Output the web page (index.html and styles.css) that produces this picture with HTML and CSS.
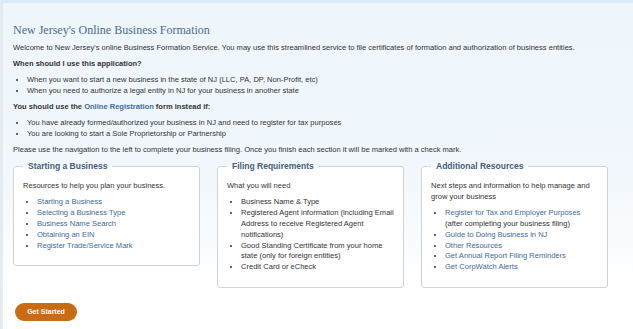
FILE: index.html
```html
<!DOCTYPE html>
<html lang="en">

<head>
    <meta charset="UTF-8">
    <meta name="viewport" content="width=device-width, initial-scale=1.0">
    <title>New Jersey's Online Business Formation</title>
    <link rel="stylesheet" href="styles.css">
</head>

<body>
    <main class="page">
        <h1 class="page-title">New Jersey's Online Business Formation</h1>
        <p>Welcome to New Jersey's online Business Formation Service. You may use this streamlined service to file certificates of formation and authorization of business entities.</p>

        <p class="question">When should I use this application?</p>
        <ul class="list">
            <li>When you want to start a new business in the state of NJ (LLC, PA, DP, Non-Profit, etc)</li>
            <li>When you need to authorize a legal entity in NJ for your business in another state</li>
        </ul>

        <p class="question">You should use the <a href="#">Online Registration</a> form instead if:</p>
        <ul class="list">
            <li>You have already formed/authorized your business in NJ and need to register for tax purposes</li>
            <li>You are looking to start a Sole Proprietorship or Partnership</li>
        </ul>

        <p>Please use the navigation to the left to complete your business filing. Once you finish each section it will be marked with a check mark.</p>

        <div class="boxes">
            <fieldset class="box">
                <legend>Starting a Business</legend>
                <p>Resources to help you plan your business.</p>
                <ul class="list">
                    <li><a href="#">Starting a Business</a></li>
                    <li><a href="#">Selecting a Business Type</a></li>
                    <li><a href="#">Business Name Search</a></li>
                    <li><a href="#">Obtaining an EIN</a></li>
                    <li><a href="#">Register Trade/Service Mark</a></li>
                </ul>
            </fieldset>

            <fieldset class="box">
                <legend>Filing Requirements</legend>
                <p>What you will need</p>
                <ul class="list">
                    <li>Business Name &amp; Type</li>
                    <li>Registered Agent information (including Email Address to receive Registered Agent notifications)</li>
                    <li>Good Standing Certificate from your home state (only for foreign entities)</li>
                    <li>Credit Card or eCheck</li>
                </ul>
            </fieldset>

            <fieldset class="box">
                <legend>Additional Resources</legend>
                <p>Next steps and information to help manage and grow your business</p>
                <ul class="list">
                    <li><a href="#">Register for Tax and Employer Purposes</a><br>(after completing your business filing)</li>
                    <li><a href="#">Guide to Doing Business in NJ</a></li>
                    <li><a href="#">Other Resources</a></li>
                    <li><a href="#">Get Annual Report Filing Reminders</a></li>
                    <li><a href="#">Get CorpWatch Alerts</a></li>
                </ul>
            </fieldset>
        </div>

        <button class="start-button">Get Started</button>
    </main>
</body>

</html>
```

FILE: styles.css
```css
* {
    margin: 0;
    padding: 0;
    box-sizing: border-box;
}

html,
body {
    height: 100%;
}

body {
    font-family: 'Liberation Sans', Arial, sans-serif;
    font-size: 7.55px;
    line-height: 10.8px;
    color: #333333;
    background-color: #ffffff;
}

a {
    color: #3d6b99;
    text-decoration: none;
}

.page {
    min-height: 100%;
    border-top: 3px solid #d9ebf7;
    border-left: 3px solid #e6ebef;
    padding: 20px 25px 0 10px;
    background: linear-gradient(#eef6fc 0%, #f1f7fc 50%, #ffffff 88%);
}

.page-title {
    font-family: 'Liberation Serif', 'Times New Roman', serif;
    font-size: 12px;
    line-height: 1.2;
    font-weight: normal;
    color: #4b6b8c;
    margin-bottom: 6px;
}

.page p {
    margin-bottom: 5.2px;
}

.question {
    font-weight: bold;
}

.list {
    padding-left: 14px;
    margin-bottom: 5px;
}

.boxes {
    display: grid;
    grid-template-columns: repeat(3, 187px);
    gap: 17px;
    align-items: start;
    margin-top: 6px;
}

.box {
    border: 1px solid #cfd3d6;
    border-radius: 3px;
    padding: 9px 9px 14px;
    background-color: #ffffff;
}

.box legend {
    padding: 0 5px;
    font-size: 8.5px;
    line-height: 11px;
    font-weight: bold;
    color: #3f5d7c;
}

.box .list {
    margin-bottom: 0;
}

.start-button {
    margin-top: 15px;
    margin-left: 2px;
    width: 62px;
    height: 18px;
    border: none;
    border-radius: 9px;
    background-color: #c96b14;
    color: #ffffff;
    font-family: 'Liberation Sans', Arial, sans-serif;
    font-size: 7px;
    font-weight: bold;
}
```
